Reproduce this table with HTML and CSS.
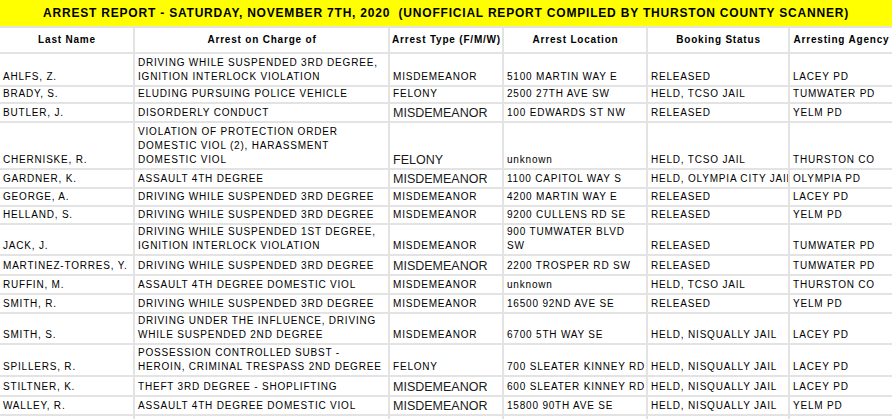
FILE: index.html
```html
<!DOCTYPE html>
<html>
<head>
<meta charset="utf-8">
<title>Arrest Report</title>
<link rel="stylesheet" href="styles.css">
</head>
<body>
<div class="sheet">
  <div class="title">ARREST REPORT - SATURDAY, NOVEMBER 7TH, 2020&nbsp; (UNOFFICIAL REPORT COMPILED BY THURSTON COUNTY SCANNER)</div>
  <div class="row head">
    <div class="cell">Last Name</div>
    <div class="cell">Arrest on Charge of</div>
    <div class="cell">Arrest Type (F/M/W)</div>
    <div class="cell">Arrest Location</div>
    <div class="cell">Booking Status</div>
    <div class="cell">Arresting Agency</div>
  </div>
  <div class="row h31">
    <div class="cell">AHLFS, Z.</div>
    <div class="cell">DRIVING WHILE SUSPENDED 3RD DEGREE,<br>IGNITION INTERLOCK VIOLATION</div>
    <div class="cell">MISDEMEANOR</div>
    <div class="cell">5100 MARTIN WAY E</div>
    <div class="cell">RELEASED</div>
    <div class="cell">LACEY PD</div>
  </div>
  <div class="row h15">
    <div class="cell">BRADY, S.</div>
    <div class="cell">ELUDING PURSUING POLICE VEHICLE</div>
    <div class="cell">FELONY</div>
    <div class="cell">2500 27TH AVE SW</div>
    <div class="cell">HELD, TCSO JAIL</div>
    <div class="cell">TUMWATER PD</div>
  </div>
  <div class="row h17">
    <div class="cell">BUTLER, J.</div>
    <div class="cell">DISORDERLY CONDUCT</div>
    <div class="cell big">MISDEMEANOR</div>
    <div class="cell">100 EDWARDS ST NW</div>
    <div class="cell">RELEASED</div>
    <div class="cell">YELM PD</div>
  </div>
  <div class="row h45">
    <div class="cell">CHERNISKE, R.</div>
    <div class="cell">VIOLATION OF PROTECTION ORDER<br>DOMESTIC VIOL (2), HARASSMENT<br>DOMESTIC VIOL</div>
    <div class="cell big">FELONY</div>
    <div class="cell">unknown</div>
    <div class="cell">HELD, TCSO JAIL</div>
    <div class="cell">THURSTON CO</div>
  </div>
  <div class="row h17">
    <div class="cell">GARDNER, K.</div>
    <div class="cell">ASSAULT 4TH DEGREE</div>
    <div class="cell big">MISDEMEANOR</div>
    <div class="cell">1100 CAPITOL WAY S</div>
    <div class="cell">HELD, OLYMPIA CITY JAIL</div>
    <div class="cell">OLYMPIA PD</div>
  </div>
  <div class="row h16">
    <div class="cell">GEORGE, A.</div>
    <div class="cell">DRIVING WHILE SUSPENDED 3RD DEGREE</div>
    <div class="cell">MISDEMEANOR</div>
    <div class="cell">4200 MARTIN WAY E</div>
    <div class="cell">RELEASED</div>
    <div class="cell">LACEY PD</div>
  </div>
  <div class="row h16">
    <div class="cell">HELLAND, S.</div>
    <div class="cell">DRIVING WHILE SUSPENDED 3RD DEGREE</div>
    <div class="cell">MISDEMEANOR</div>
    <div class="cell">9200 CULLENS RD SE</div>
    <div class="cell">RELEASED</div>
    <div class="cell">YELM PD</div>
  </div>
  <div class="row h29">
    <div class="cell">JACK, J.</div>
    <div class="cell">DRIVING WHILE SUSPENDED 1ST DEGREE,<br>IGNITION INTERLOCK VIOLATION</div>
    <div class="cell">MISDEMEANOR</div>
    <div class="cell">900 TUMWATER BLVD<br>SW</div>
    <div class="cell">RELEASED</div>
    <div class="cell">TUMWATER PD</div>
  </div>
  <div class="row h18">
    <div class="cell">MARTINEZ-TORRES, Y.</div>
    <div class="cell">DRIVING WHILE SUSPENDED 3RD DEGREE</div>
    <div class="cell big">MISDEMEANOR</div>
    <div class="cell">2200 TROSPER RD SW</div>
    <div class="cell">RELEASED</div>
    <div class="cell">TUMWATER PD</div>
  </div>
  <div class="row h17">
    <div class="cell">RUFFIN, M.</div>
    <div class="cell">ASSAULT 4TH DEGREE DOMESTIC VIOL</div>
    <div class="cell">MISDEMEANOR</div>
    <div class="cell">unknown</div>
    <div class="cell">HELD, TCSO JAIL</div>
    <div class="cell">THURSTON CO</div>
  </div>
  <div class="row h17">
    <div class="cell">SMITH, R.</div>
    <div class="cell">DRIVING WHILE SUSPENDED 3RD DEGREE</div>
    <div class="cell">MISDEMEANOR</div>
    <div class="cell">16500 92ND AVE SE</div>
    <div class="cell">RELEASED</div>
    <div class="cell">YELM PD</div>
  </div>
  <div class="row h29">
    <div class="cell">SMITH, S.</div>
    <div class="cell">DRIVING UNDER THE INFLUENCE, DRIVING<br>WHILE SUSPENDED 2ND DEGREE</div>
    <div class="cell">MISDEMEANOR</div>
    <div class="cell">6700 5TH WAY SE</div>
    <div class="cell">HELD, NISQUALLY JAIL</div>
    <div class="cell">LACEY PD</div>
  </div>
  <div class="row h30">
    <div class="cell">SPILLERS, R.</div>
    <div class="cell">POSSESSION CONTROLLED SUBST -<br>HEROIN, CRIMINAL TRESPASS 2ND DEGREE</div>
    <div class="cell">FELONY</div>
    <div class="cell">700 SLEATER KINNEY RD</div>
    <div class="cell">HELD, NISQUALLY JAIL</div>
    <div class="cell">LACEY PD</div>
  </div>
  <div class="row h18">
    <div class="cell">STILTNER, K.</div>
    <div class="cell">THEFT 3RD DEGREE - SHOPLIFTING</div>
    <div class="cell big">MISDEMEANOR</div>
    <div class="cell">600 SLEATER KINNEY RD</div>
    <div class="cell">HELD, NISQUALLY JAIL</div>
    <div class="cell">LACEY PD</div>
  </div>
  <div class="row h17">
    <div class="cell">WALLEY, R.</div>
    <div class="cell">ASSAULT 4TH DEGREE DOMESTIC VIOL</div>
    <div class="cell big">MISDEMEANOR</div>
    <div class="cell">15800 90TH AVE SE</div>
    <div class="cell">HELD, NISQUALLY JAIL</div>
    <div class="cell">YELM PD</div>
  </div>
  <div class="row h17">
    <div class="cell"></div>
    <div class="cell"></div>
    <div class="cell"></div>
    <div class="cell"></div>
    <div class="cell"></div>
    <div class="cell"></div>
  </div>
</div>
</body>
</html>
```
FILE: styles.css
```css
html, body {
  margin: 0;
  padding: 0;
  overflow: hidden;
  background: #ffffff;
}

.sheet {
  width: 892px;
  display: flex;
  flex-direction: column;
  gap: 2px;
  background: #e3e3e3;
  font-family: "Liberation Sans", Arial, sans-serif;
  color: #000;
}

.title {
  height: 26px;
  background: #ffff00;
  font-weight: bold;
  font-size: 12px;
  letter-spacing: 0.8px;
  display: flex;
  align-items: center;
  justify-content: center;
  white-space: nowrap;
}

.row {
  display: grid;
  grid-template-columns: 133px 253px 112px 142px 140px 1fr;
  column-gap: 2px;
}

.cell {
  background: #ffffff;
  padding: 0 2px 1px 3px;
  font-size: 10px;
  letter-spacing: 0.8px;
  line-height: 14px;
  white-space: nowrap;
  overflow: hidden;
  display: flex;
  align-items: flex-end;
}

.cell.big {
  font-size: 12.5px;
  letter-spacing: 0;
  color: #1a1a1a;
}

.head {
  height: 24px;
}

.head .cell {
  font-weight: bold;
  justify-content: center;
  align-items: center;
  padding-bottom: 0;
}

.h15 { height: 15px; }
.h16 { height: 16px; }
.h17 { height: 17px; }
.h18 { height: 18px; }
.h29 { height: 29px; }
.h30 { height: 30px; }
.h31 { height: 31px; }
.h45 { height: 45px; }
```
